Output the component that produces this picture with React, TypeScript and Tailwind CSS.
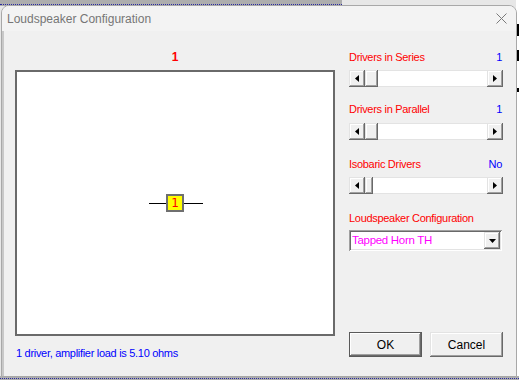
import React from "react";

const raised =
  "shadow-[inset_-1px_-1px_#696969,inset_1px_1px_#e3e3e3,inset_-2px_-2px_#a0a0a0,inset_2px_2px_#ffffff]";
const sunken =
  "shadow-[inset_1px_1px_#a0a0a0,inset_-1px_-1px_#ffffff,inset_2px_2px_#696969,inset_-2px_-2px_#e3e3e3]";

function Arrow({ dir }: { dir: "left" | "right" | "down" }) {
  if (dir === "down")
    return (
      <svg width="7" height="4" viewBox="0 0 7 4">
        <path d="M0 0H7L3.5 4Z" fill="#000" />
      </svg>
    );
  return (
    <svg width="4" height="7" viewBox="0 0 4 7">
      {dir === "left" ? <path d="M4 0V7L0 3.5Z" fill="#000" /> : <path d="M0 0V7L4 3.5Z" fill="#000" />}
    </svg>
  );
}

function ScrollBar({ thumb }: { thumb: number }) {
  return (
    <div className="flex h-[17px] w-[154px]">
      <div className={`flex w-[16px] items-center justify-center bg-[#f0f0f0] ${raised}`}>
        <Arrow dir="left" />
      </div>
      <div className={`h-full bg-[#f0f0f0] ${raised}`} style={{ width: thumb }} />
      <div className="flex-1 border-y border-[#e3e3e3] bg-white" />
      <div className={`flex w-[16px] items-center justify-center bg-[#f0f0f0] ${raised}`}>
        <Arrow dir="right" />
      </div>
    </div>
  );
}

function Row({ label, value }: { label: string; value: string }) {
  return (
    <div className="flex h-[14px] w-[154px] items-center justify-between leading-[14px]">
      <span className="text-[#ff0000]">{label}</span>
      <span className="pr-[1px] text-[#0000ff]">{value}</span>
    </div>
  );
}

export default function App() {
  return (
    <div
      className="relative h-[380px] w-[519px] overflow-hidden bg-[#e7e7e7]"
      style={{ fontFamily: '"Liberation Sans", Arial, sans-serif' }}
    >
      {/* background app pieces */}
      <div className="absolute left-0 top-0 h-[6px] w-[342px] bg-[#adadad]" />
      <div className="absolute left-0 top-[4px] h-[1px] w-[342px] border-t border-dotted border-[#2a2aa0]" />
      <div className="absolute bottom-0 left-0 h-[4px] w-[519px] bg-[#adadad]" />
      <div className="absolute bottom-[1px] left-0 h-[1px] w-[519px] border-t border-dotted border-[#2a2aa0]" />
      <div className="absolute right-0 top-0 h-[376px] w-[3px] bg-white" />
      <div className="absolute right-0 top-[24px] h-[12px] w-[2px] bg-black" />
      <div className="absolute right-0 top-[50px] h-[11px] w-[2px] bg-black" />
      <div className="absolute right-0 top-[88px] h-[4px] w-[2px] bg-black" />

      {/* dialog window */}
      <div className="relative ml-[1px] mt-[5px] flex h-[372px] w-[516px] flex-col overflow-hidden rounded-t-[8px] border border-[#a8a8a8] bg-[#f0f0f0]">
        <div className="flex h-[25px] shrink-0 items-center justify-between bg-[#f3f3f3] pl-[5px] pr-[9px]">
          <span className="text-[12px] text-[#767676]">Loudspeaker Configuration</span>
          <svg width="11" height="11" viewBox="0 0 11 11">
            <path d="M0.5 0.5L10.5 10.5M10.5 0.5L0.5 10.5" stroke="#7a7a7a" strokeWidth="1" />
          </svg>
        </div>

        <div className="flex flex-1 border-l-2 border-[#c8c8c8] pl-[11px] text-[11px] tracking-[-0.3px]">
          {/* left column */}
          <div className="flex w-[320px] flex-col">
            <div className="mt-[19px] h-[14px] text-center text-[12px] font-bold leading-[14px] tracking-normal text-[#ff0000]">
              1
            </div>
            <div className="mt-[6px] flex h-[266px] items-center justify-center border-2 border-[#6a6a6a] bg-white">
              <div className="ml-[2px] flex items-center">
                <div className="h-[1px] w-[17px] bg-black" />
                <div
                  className="flex h-[18px] w-[18px] items-center justify-center border-2 border-[#6f6f6f] bg-[#ffff00] text-[12px] leading-none text-[#ff0000]"
                  style={{ fontFamily: '"DejaVu Sans", sans-serif' }}
                >
                  1
                </div>
                <div className="h-[1px] w-[19px] bg-black" />
              </div>
            </div>
            <div className="mt-[10px] h-[14px] pl-[1px] leading-[14px] text-[#0000ff]">
              1 driver, amplifier load is 5.10 ohms
            </div>
          </div>

          {/* right column */}
          <div className="ml-[14px] flex w-[154px] flex-col">
            <div className="mt-[19px]">
              <Row label="Drivers in Series" value="1" />
            </div>
            <div className="mt-[6px]">
              <ScrollBar thumb={13} />
            </div>
            <div className="mt-[15px]">
              <Row label="Drivers in Parallel" value="1" />
            </div>
            <div className="mt-[7px]">
              <ScrollBar thumb={13} />
            </div>
            <div className="mt-[17px]">
              <Row label="Isobaric Drivers" value="No" />
            </div>
            <div className="mt-[6px]">
              <ScrollBar thumb={8} />
            </div>
            <div className="mt-[17px] h-[14px] leading-[14px] text-[#ff0000]">Loudspeaker Configuration</div>
            <div className={`mt-[5px] flex h-[21px] w-[153px] items-center bg-white p-[2px] ${sunken}`}>
              <span className="flex-1 pl-[1px] text-[11.5px] text-[#ff00ff]">Tapped Horn TH</span>
              <div className={`flex h-[17px] w-[16px] items-center justify-center bg-[#f0f0f0] ${raised}`}>
                <Arrow dir="down" />
              </div>
            </div>
            <div className="mt-[81px] flex gap-[8px] tracking-normal">
              <button className="flex h-[25px] w-[73px] items-center justify-center border border-[#5a5a5a] bg-[#f0f0f0] text-[12px] text-black shadow-[inset_-1px_-1px_#696969,inset_1px_1px_#ffffff,inset_-2px_-2px_#a0a0a0]">
                OK
              </button>
              <button className={`flex h-[25px] w-[73px] items-center justify-center bg-[#f0f0f0] text-[12px] text-black ${raised}`}>
                Cancel
              </button>
            </div>
          </div>
        </div>
      </div>
    </div>
  );
}
